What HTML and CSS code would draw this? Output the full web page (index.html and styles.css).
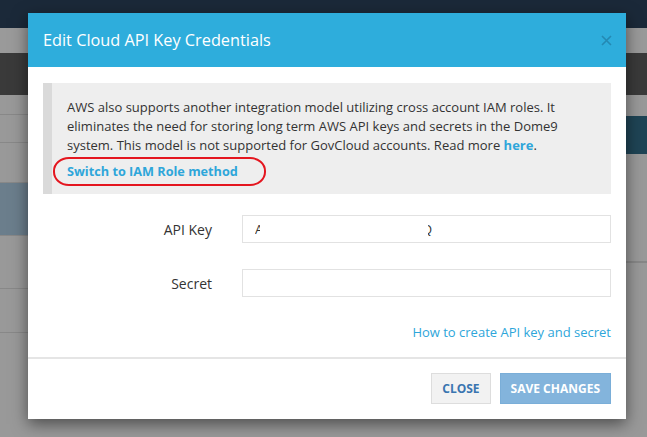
FILE: index.html
```html
<!DOCTYPE html>
<html lang="en">
<head>
    <meta charset="UTF-8">
    <meta name="viewport" content="width=device-width, initial-scale=1.0">
    <title>Edit Cloud API Key Credentials</title>
    <link rel="stylesheet" href="styles.css">
</head>
<body>
<div class="page">
    <div class="topnav"></div>
    <div class="subnav"></div>
    <div class="toolbar"></div>
    <div class="content">
        <div class="sidebar">
            <div class="side-row r1"></div>
            <div class="side-row r2"></div>
            <div class="side-row r3"></div>
            <div class="side-row r4 active"></div>
            <div class="side-row r5"></div>
            <div class="side-row r6"></div>
        </div>
        <div class="main">
            <div class="main-gap"></div>
            <div class="main-head"></div>
            <div class="main-panel"></div>
        </div>
    </div>
</div>

<!-- modal -->
<div class="modal">
    <div class="modal-header">
        <h4 class="modal-title">Edit Cloud API Key Credentials</h4>
        <button class="close-btn" aria-label="Close">
            <svg width="11" height="11" viewBox="0 0 11 11"><path d="M1 1L10 10M10 1L1 10" stroke="currentColor" stroke-width="1.6"/></svg>
        </button>
    </div>

    <div class="modal-body">
        <div class="info-box">
            <p>AWS also supports another integration model utilizing cross account IAM roles. It eliminates the need for storing long term AWS API keys and secrets in the Dome9 system. This model is not supported for GovCloud accounts. Read more <a href="#" class="strong-link">here</a>.</p>
            <a href="#" class="strong-link switch-link">Switch to IAM Role method</a>
            <span class="marker"></span>
        </div>

        <div class="form-row">
            <label for="apiKey">API Key</label>
            <div class="field"><span class="clip-a">A</span><span class="clip-q">Q</span></div>
        </div>

        <div class="form-row">
            <label for="secret">Secret</label>
            <input type="text" id="secret">
        </div>

        <div class="help">
            <a href="#">How to create API key and secret</a>
        </div>
    </div>

    <div class="modal-footer">
        <button class="btn btn-default">Close</button>
        <button class="btn btn-primary" disabled>Save Changes</button>
    </div>
</div>
</body>
</html>
```

FILE: styles.css
```css
body {
    margin: 0;
    font-family: "Open Sans", "Liberation Sans", sans-serif;
    background-color: #999999;
    overflow: hidden;
}

/* background page (behind the overlay) */
.page {
    height: 437px;
}

.topnav {
    height: 28px;
    background-color: #1b2939;
}

.subnav {
    height: 25px;
    background-color: #9a9a9a;
}

.toolbar {
    height: 42px;
    background-color: #3a3a3a;
}

.content {
    display: flex;
}

.sidebar {
    width: 320px;
}

.side-row {
    border-bottom: 1px solid #888888;
}

.r1 { height: 19px; }
.r2 { height: 27px; }
.r3 { height: 39px; }
.r4 { height: 52px; }
.r5 { height: 52px; }
.r6 { height: 43px; }

.side-row.active {
    background-color: #6b7e8c;
}

.main {
    flex: 1;
}

.main-gap {
    height: 21px;
}

.main-head {
    height: 38px;
    background-color: #1f4455;
}

.main-panel {
    height: 107px;
    border-bottom: 2px solid #878787;
}

/* modal */
.modal {
    position: absolute;
    left: 28px;
    top: 13px;
    width: 598px;
    background-color: #ffffff;
    box-shadow: 0 5px 15px rgba(0, 0, 0, 0.5);
}

.modal-header {
    height: 54px;
    background-color: #2eaddc;
    display: flex;
    align-items: center;
    justify-content: space-between;
    padding: 0 14px 0 15px;
}

.modal-title {
    margin: 0;
    color: #ffffff;
    font-size: 16.3px;
    font-weight: 400;
}

.close-btn {
    border: none;
    background: none;
    padding: 0;
    color: #2489b3;
    display: flex;
    cursor: pointer;
}

.modal-body {
    padding: 16px 15px 15px;
}

.info-box {
    position: relative;
    background-color: #eeeeee;
    border-left: 9px solid #dadada;
    padding: 15px 15px 13px;
    font-size: 13px;
    line-height: 19px;
    color: #333333;
}

.info-box p {
    margin: 0 0 7px;
}

.strong-link {
    color: #2ea6da;
    font-weight: 700;
    text-decoration: none;
}

.switch-link {
    font-size: 12.7px;
}

/* red annotation drawn around the link */
.marker {
    position: absolute;
    left: 1px;
    top: 74px;
    width: 209px;
    height: 25px;
    border: 2px solid #e4161f;
    border-radius: 16px / 14px;
}

.form-row {
    display: grid;
    grid-template-columns: 169px 1fr;
    column-gap: 30px;
    align-items: center;
    margin-top: 21px;
}

.form-row + .form-row {
    margin-top: 26px;
}

label {
    text-align: right;
    font-size: 14px;
    color: #333333;
}

input, .field {
    height: 28px;
    box-sizing: border-box;
    border: 1px solid #e2e2e2;
    padding: 0 12px;
    font-family: inherit;
    font-size: 13px;
    color: #333333;
    outline: none;
}

.field {
    display: flex;
    align-items: center;
}

.clip-a {
    display: inline-block;
    width: 5px;
    overflow: hidden;
}

.clip-q {
    display: inline-flex;
    justify-content: flex-end;
    width: 4px;
    overflow: hidden;
    margin-left: 168px;
}

.help {
    text-align: right;
    margin-top: 26px;
    font-size: 13px;
    line-height: 19px;
}

.help a {
    color: #2ea6da;
    text-decoration: none;
}

.modal-footer {
    border-top: 2px solid #e5e5e5;
    padding: 14px 15px 15px;
    display: flex;
    justify-content: flex-end;
    gap: 9px;
}

.btn {
    height: 31px;
    font-family: inherit;
    font-size: 12px;
    font-weight: 700;
    text-transform: uppercase;
    padding: 0 10px;
    border-radius: 0;
    cursor: pointer;
}

.btn-default {
    background-color: #f2f2f2;
    border: 1px solid #dddddd;
    color: #3a75b0;
}

.btn-primary {
    background-color: #83b4dc;
    border: 1px solid #7aaed8;
    color: #ffffff;
}
```
